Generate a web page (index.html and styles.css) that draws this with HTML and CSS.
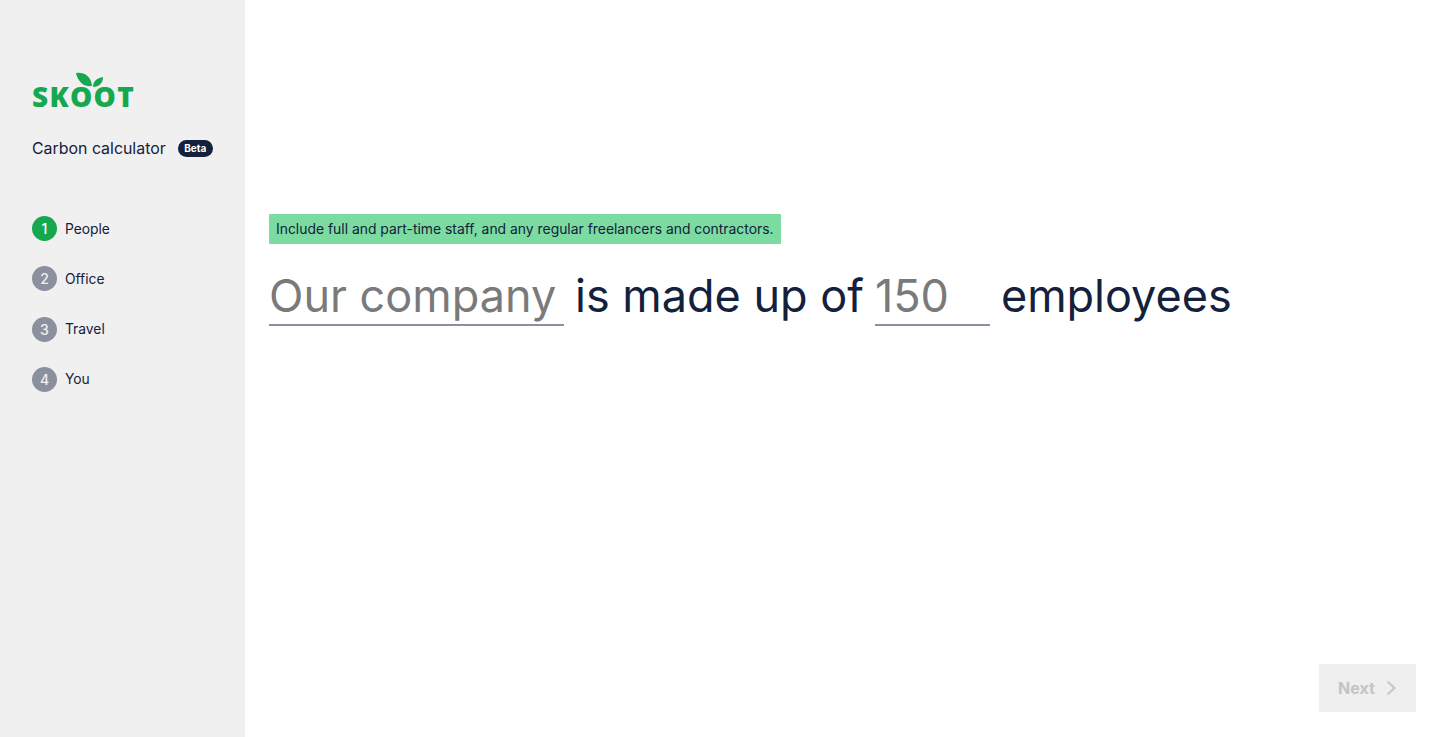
FILE: index.html
```html
<!DOCTYPE html>
<html lang="en">
<head>
  <meta charset="UTF-8">
  <title>Skoot Carbon Calculator</title>
  <link rel="stylesheet" href="styles.css">
</head>
<body>
  <aside class="sidebar">
    <div class="logo">
      <svg class="logo-leaves" viewBox="0 0 34 20" width="34" height="20">
        <path d="M2 1C10 0 17 4 18 14C10 15 4 10 2 1Z" fill="#16a84e"/>
        <path d="M29 5C29 11 25 15 19 15C19 9 23 6 29 5Z" fill="#16a84e"/>
      </svg>
      <span class="logo-text">SKOOT</span>
    </div>
    <div class="product">
      <span class="product-name">Carbon calculator</span>
      <span class="beta">Beta</span>
    </div>
    <ol class="steps">
      <li class="step active"><span class="step-num">1</span>People</li>
      <li class="step"><span class="step-num">2</span>Office</li>
      <li class="step"><span class="step-num">3</span>Travel</li>
      <li class="step"><span class="step-num">4</span>You</li>
    </ol>
  </aside>

  <main class="content">
    <div class="hint">Include full and part-time staff, and any regular freelancers and contractors.</div>
    <div class="sentence">
      <span class="field field-company">Our company</span>
      <span>is made up of</span>
      <span class="field field-count">150</span>
      <span>employees</span>
    </div>
    <button class="next-btn" disabled>
      Next
      <svg viewBox="0 0 12 16" width="12" height="16"><path d="M2.5 1.5L9.5 8L2.5 14.5" fill="none" stroke="#c6c8cc" stroke-width="2.2"/></svg>
    </button>
  </main>
</body>
</html>
```

FILE: styles.css
```css
* { box-sizing: border-box; }
html, body { height: 100%; }
body {
  margin: 0;
  display: flex;
  height: 737px;
  overflow: hidden;
  font-family: Inter, "Noto Sans", Arial, sans-serif;
  color: #14213d;
  background: #fff;
}
.sidebar {
  width: 245px;
  flex-shrink: 0;
  background: #f0f0f0;
  padding: 72px 0 0 32px;
}
.logo {
  position: relative;
  height: 36px;
  display: flex;
  align-items: flex-end;
}
.logo-leaves {
  position: absolute;
  left: 42px;
  top: 0;
}
.logo-text {
  font-family: "Open Sans", sans-serif;
  font-weight: 800;
  font-size: 28px;
  line-height: 24px;
  letter-spacing: 1.3px;
  color: #16a84e;
}
.product {
  display: flex;
  align-items: center;
  margin-top: 28px;
  height: 24px;
}
.product-name {
  font-size: 15.9px;
}
.beta {
  margin-left: 12px;
  width: 35px;
  height: 17px;
  border-radius: 9px;
  background: #14213d;
  color: #fff;
  font-size: 10px;
  font-weight: 700;
  line-height: 17px;
  text-align: center;
}
.steps {
  list-style: none;
  margin: 56px 0 0;
  padding: 0;
  display: flex;
  flex-direction: column;
  gap: 25.3px;
}
.step {
  display: flex;
  align-items: center;
  height: 25px;
  font-size: 13.8px;
}
.step-num {
  width: 25px;
  height: 25px;
  margin-right: 8px;
  border-radius: 50%;
  background: #8b8f9e;
  color: #f0f0f0;
  font-size: 14px;
  font-weight: 500;
  line-height: 25px;
  text-align: center;
}
.step.active .step-num {
  background: #16a84e;
  color: #fff;
}
.content {
  position: relative;
  flex: 1;
  padding: 214px 0 0 24px;
}
.hint {
  display: inline-block;
  height: 30px;
  padding: 0 7px;
  background: #7bdba1;
  border-radius: 1px;
  font-size: 13.9px;
  line-height: 30px;
  white-space: nowrap;
}
.sentence {
  display: flex;
  align-items: flex-end;
  gap: 11px;
  margin-top: 22px;
  font-size: 45px;
  font-weight: 400;
  line-height: 60px;
  white-space: nowrap;
}
.field {
  color: #7a7a7a;
  border-bottom: 2px solid #8b8f9e;
  height: 60px;
}
.field-company { width: 295px; }
.field-count { width: 115px; }
.next-btn {
  position: absolute;
  right: 24px;
  bottom: 25px;
  width: 97px;
  height: 48px;
  display: flex;
  align-items: center;
  justify-content: center;
  gap: 10px;
  border: none;
  border-radius: 2px;
  background: #efefef;
  color: #c2c4c9;
  font-family: inherit;
  font-size: 16px;
  font-weight: 700;
}
```
